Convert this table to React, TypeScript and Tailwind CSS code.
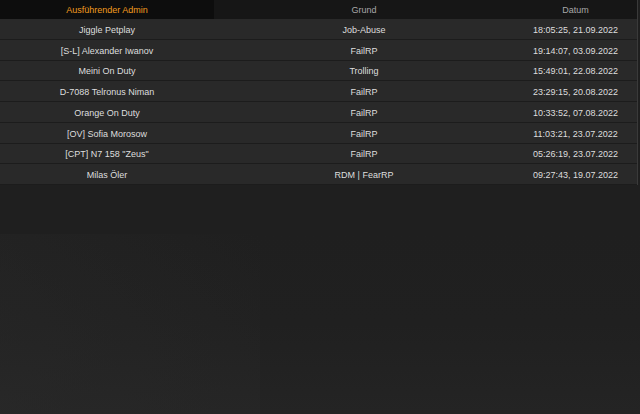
import React from 'react';

type Entry = { admin: string; reason: string; date: string };

const entries: Entry[] = [
  { admin: 'Jiggle Petplay', reason: 'Job-Abuse', date: '18:05:25, 21.09.2022' },
  { admin: '[S-L] Alexander Iwanov', reason: 'FailRP', date: '19:14:07, 03.09.2022' },
  { admin: 'Meini On Duty', reason: 'Trolling', date: '15:49:01, 22.08.2022' },
  { admin: 'D-7088 Telronus Niman', reason: 'FailRP', date: '23:29:15, 20.08.2022' },
  { admin: 'Orange On Duty', reason: 'FailRP', date: '10:33:52, 07.08.2022' },
  { admin: '[OV] Sofia Morosow', reason: 'FailRP', date: '11:03:21, 23.07.2022' },
  { admin: '[CPT] N7 158 "Zeus"', reason: 'FailRP', date: '05:26:19, 23.07.2022' },
  { admin: 'Milas Öler', reason: 'RDM | FearRP', date: '09:27:43, 19.07.2022' },
];

export default function App() {
  return (
    <div
      className="relative w-[640px] h-[414px] overflow-hidden bg-[#1f1f1f] text-[9px] leading-none"
      style={{ fontFamily: '"Liberation Sans", Arial, sans-serif' }}
    >
      {/* faint floor at the bottom, like the game backdrop */}
      <div className="absolute inset-x-0 bottom-0 h-[180px] bg-gradient-to-t from-[#242424] via-[#202020] to-transparent" />
      <div className="absolute left-0 bottom-0 w-[260px] h-[180px] bg-gradient-to-tr from-[#2a2a2a] to-transparent opacity-60" />

      <div className="relative w-[638px] border-r border-[#3a3a3a]">
        <div className="grid grid-cols-[214px_300px_1fr] h-[19px] bg-[#161616]">
          <div className="flex items-center justify-center pt-[2px] bg-[#0d0d0d] text-[#f39c1f]">Ausführender Admin</div>
          <div className="flex items-center justify-center pt-[2px] text-[#a8a8a8]">Grund</div>
          <div className="flex items-center justify-center pt-[2px] text-[#a8a8a8]">Datum</div>
        </div>
        {entries.map((e) => (
          <div
            key={e.date}
            className="grid grid-cols-[214px_300px_1fr] h-[20.75px] pt-[3px] bg-[#292929] border-b border-[#1c1c1c] text-[#dedede]"
          >
            <div className="flex items-center justify-center">{e.admin}</div>
            <div className="flex items-center justify-center">{e.reason}</div>
            <div className="flex items-center justify-center">{e.date}</div>
          </div>
        ))}
      </div>
    </div>
  );
}
